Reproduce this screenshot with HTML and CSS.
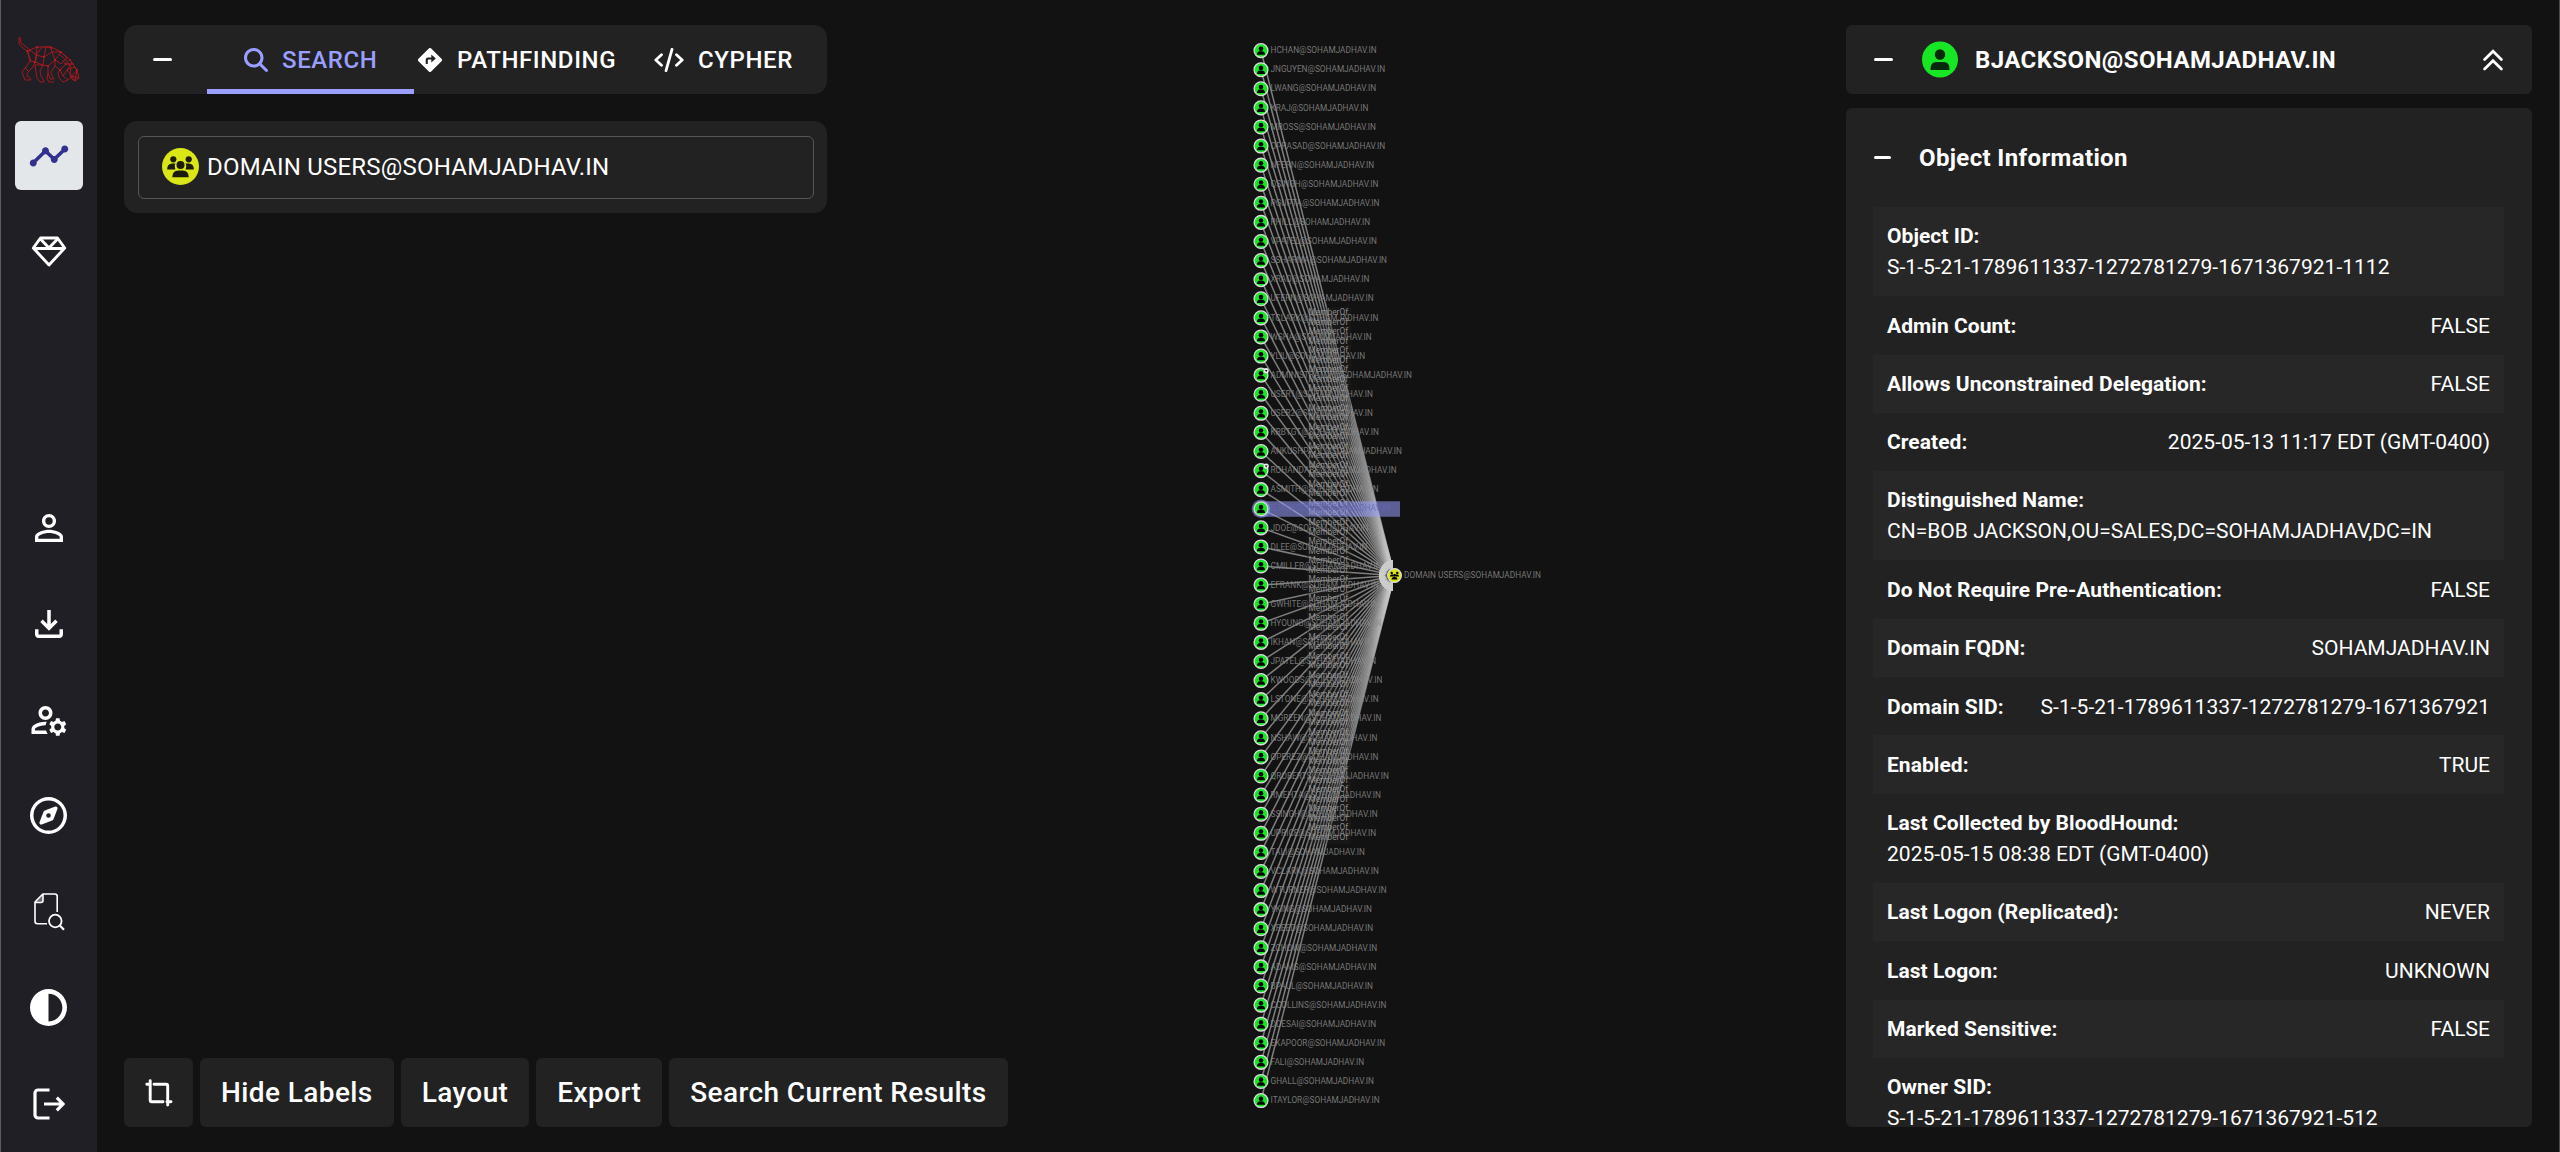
FILE: index.html
```html
<!DOCTYPE html>
<html lang="en">
<head>
<meta charset="utf-8">
<title>BloodHound</title>
<link rel="stylesheet" href="styles.css">
</head>
<body>
<div class="app">
  <nav class="rail">
    <svg class="logo" viewBox="17 35 64 50" width="64" height="50">
      <path d="M19 37v7l4 4 4 3 3-1 7-3h14l10 5 9 8 7 10 2 8-4 3-3-2-2-4 1-8-5-7-7-6M20 37l1 6 9 7-2 3 2 8-4 6-4 5 3 8h6l-2-3-2-1 1-4 5-5 3-7 1-6M25 67l3 4M27 51l4 10M30 50l6 5-1 7-5-1M37 47l-1 8 8 2 2-10M44 57l-1 8-8-3M44 57l8-5-1-5-7 0M36 55l6-8M52 52l9 0M52 52l3 8 6-8M55 60l-7 6-5-1M55 60l6 4 6-6-6-6M43 65l-8 0 1 7 1 6 3 4h4l-1-3-2-3-1-5 3-6M48 66v7l2 6h4l-2-3-1-4 4-6 0-6M48 73l-1 6 2 3h5M55 66l5 4 3 6 5 4-5 2-4-4-1-6 2-2 6-6-4-4M66 64l8 0M66 64l-6 6M63 76l4-6 5-8M67 70l7-3 3 3-5 6-5-6M72 76l7 2M68 80l4-4 3 5 2-11M72 52"/>
      <g class="logo-dots"><circle cx="27" cy="51" r=".8"/><circle cx="37" cy="47" r=".8"/><circle cx="51" cy="48" r=".8"/><circle cx="61" cy="52" r=".8"/><circle cx="70" cy="60" r=".8"/><circle cx="77" cy="70" r=".8"/><circle cx="44" cy="57" r=".8"/><circle cx="55" cy="60" r=".8"/><circle cx="48" cy="66" r=".8"/><circle cx="66" cy="64" r=".8"/><circle cx="60" cy="70" r=".8"/><circle cx="35" cy="62" r=".8"/></g>
    </svg>
    <a class="slot active"><svg viewBox="0 0 24 24" width="42" height="42"><path d="M23 8c0 1.100-.9 2-2 2-.18 0-.35-.02-.51-.07l-3.560 3.550c.05.16.07.34.07.52 0 1.100-.9 2-2 2s-2-.9-2-2c0-.18.02-.36.07-.52l-2.550-2.550c-.16.05-.34.07-.52.07s-.36-.02-.52-.07l-4.550 4.560c.05.16.07.33.07.51 0 1.100-.9 2-2 2s-2-.9-2-2 .9-2 2-2c.18 0 .35.02.51.07l4.560-4.550C8.020 9.360 8 9.180 8 9c0-1.100.9-2 2-2s2 .9 2 2c0 .18-.02.36-.07.52l2.550 2.550c.16-.05.34-.07.52-.07s.36.02.52.07l3.550-3.560C19.020 8.350 19 8.180 19 8c0-1.100.9-2 2-2s2 .9 2 2z"/></svg></a>
    <a class="slot"><svg viewBox="0 0 36 32" width="36" height="32"><g fill="none" stroke="#fff" stroke-width="2.900" stroke-linejoin="round"><path d="M9.500 2h17l7.200 10L18 29 2.300 12z"/><path d="M2.300 12.500h31.400M9.500 3l8.500 9 8.500-9"/></g></svg></a>
    <span class="spacer"></span>
    <a class="slot"><svg viewBox="0 0 24 24" width="42" height="42"><path d="M12 5.900a2.100 2.100 0 1 1 0 4.200 2.100 2.100 0 0 1 0-4.200m0 9c2.970 0 6.100 1.460 6.100 2.100v1.100H5.900V17c0-.64 3.130-2.100 6.100-2.100M12 4C9.790 4 8 5.790 8 8s1.790 4 4 4 4-1.790 4-4-1.790-4-4-4m0 9c-2.670 0-8 1.340-8 4v3h16v-3c0-2.660-5.330-4-8-4"/></svg></a>
    <a class="slot"><svg viewBox="0 0 24 24" width="42" height="42"><path d="M11 4h2v8l2.600-2.600L17 10.800l-5 5-5-5 1.400-1.400L11 12zM4 15h2v3h12v-3h2v3c0 1.100-.9 2-2 2H6c-1.100 0-2-.9-2-2z"/></svg></a>
    <a class="slot"><svg viewBox="0 0 24 24" width="42" height="42"><path d="M4 18v-.65c0-.34.16-.66.41-.81C6.100 15.530 8.030 15 10 15c.03 0 .05 0 .08.010.1-.7.300-1.370.590-1.980-.22-.02-.44-.03-.67-.03-2.420 0-4.680.67-6.610 1.820-.88.52-1.390 1.500-1.390 2.530V20h9.260c-.42-.6-.75-1.280-.97-2zM10 12c2.210 0 4-1.790 4-4s-1.790-4-4-4-4 1.790-4 4 1.790 4 4 4m0-6c1.100 0 2 .9 2 2s-.9 2-2 2-2-.9-2-2 .9-2 2-2m10.750 10c0-.22-.03-.42-.06-.63l1.140-1.010-1-1.730-1.450.49q-.48-.405-1.080-.63L18 11h-2l-.3 1.490q-.6.225-1.080.63l-1.450-.49-1 1.730 1.140 1.010c-.03.210-.06.410-.06.630s.03.420.06.63l-1.140 1.010 1 1.730 1.450-.49q.48.405 1.080.63L16 21h2l.3-1.490q.6-.225 1.080-.63l1.450.49 1-1.730-1.140-1.010c.03-.210.06-.410.06-.630M17 18c-1.100 0-2-.9-2-2s.9-2 2-2 2 .9 2 2-.9 2-2 2"/></svg></a>
    <a class="slot"><svg viewBox="0 0 512 512" width="37" height="37"><path d="M464 256a208 208 0 1 0-416 0 208 208 0 1 0 416 0M0 256a256 256 0 1 1 512 0 256 256 0 1 1-512 0m306.700 69.100-144.400 55.500c-19.200 7.400-38.200-11.500-30.800-30.800l55.500-144.400c3.300-8.500 9.900-15.100 18.400-18.400l144.400-55.500c19.200-7.400 38.200 11.500 30.800 30.800l-55.500 144.400c-3.200 8.500-9.900 15.100-18.400 18.400M288 256a32 32 0 1 0-64 0 32 32 0 1 0 64 0"/></svg></a>
    <a class="slot"><svg viewBox="0 0 32 38" width="32" height="38"><g fill="none" stroke="#fff" stroke-width="1.600" stroke-linejoin="round"><path d="M24.200 19V3.500A2.500 2.500 0 0 0 21.700 1H9.800L2 9v19.300a2.500 2.500 0 0 0 2.500 2.500H14M10 1v6.500A2 2 0 0 1 8 9.500H2"/><circle cx="22.300" cy="28" r="6.300" stroke-width="1.800"/><path d="M26.800 32.500l4.200 4.200" stroke-width="2.200"/></g><path d="M9.800 1v8.500H2z" opacity=".35"/></svg></a>
    <a class="slot"><svg viewBox="0 0 512 512" width="37" height="37"><path d="M448 256c0-106-86-192-192-192v384c106 0 192-86 192-192M0 256a256 256 0 1 1 512 0 256 256 0 1 1-512 0"/></svg></a>
    <a class="slot"><svg viewBox="0 0 32 32" width="32" height="32"><g fill="none" stroke="#fff" stroke-width="3.200"><path d="M16.500 2H5a3 3 0 0 0-3 3v22a3 3 0 0 0 3 3h11.500"/><path d="M11 16h19M23.800 9.600l6.300 6.400-6.300 6.400"/></g></svg></a>
  </nav>

  <main class="stage">
    <svg class="graph" width="2461" height="1152" viewBox="98 0 2461 1152"></svg>
    <div class="left">
      <div class="tabs">
        <span class="collapse"><i class="dash"></i></span>
        <div class="tab current"><svg viewBox="0 0 512 512" width="24" height="24"><path d="M416 208c0 45.900-14.900 88.300-40 122.700l126.600 126.700c12.500 12.500 12.500 32.800 0 45.300s-32.800 12.500-45.300 0L330.700 376C296.300 401.200 253.900 416 208 416 93.100 416 0 322.900 0 208S93.100 0 208 0s208 93.100 208 208M208 352a144 144 0 1 0 0-288 144 144 0 1 0 0 288"/></svg><b>SEARCH</b></div>
        <div class="tab path"><svg viewBox="0 0 24 24" width="24" height="24"><path fill-rule="evenodd" d="M10.800.5a1.700 1.700 0 0 1 2.400 0l10.300 10.300a1.700 1.700 0 0 1 0 2.400L13.200 23.500a1.700 1.700 0 0 1-2.400 0L.5 13.200a1.700 1.700 0 0 1 0-2.400zM13.300 6.500v3H10a2.300 2.300 0 0 0-2.300 2.300V16h2.100v-3.700c0-.4.200-.7.700-.7h2.800v3l4.500-4z"/></svg><b>PATHFINDING</b></div>
        <div class="tab cypher"><svg viewBox="0 0 30 24" width="30" height="24"><path d="M18 1.300l-6 21.400M7.500 6.800L1.800 12l5.700 5.200M22.500 6.800l5.700 5.200-5.700 5.200" fill="none" stroke="currentColor" stroke-width="2.800" stroke-linecap="round" stroke-linejoin="round"/></svg><b>CYPHER</b></div>
      </div>
      <div class="search"><div class="field">
        <svg viewBox="-18 -18 36 36" width="37" height="37"><circle r="18" fill="#dbe617"/><g fill="#1c1d08"><circle cx="-7" cy="-7" r="3"/><circle cx="8" cy="-7" r="3"/><path d="M-13 3q0-6 5-6h3q-1.500 2.500 0 6zM13 3q0-6-5-6H5q1.500 2.500 0 6z"/><circle cx="0" cy="-1.500" r="3.900"/><path d="M-8 10.500q0-6.500 6-6.500h4q6 0 6 6.500z"/></g></svg>
        <span>DOMAIN USERS@SOHAMJADHAV.IN</span></div></div>
      <div class="actions">
        <button class="crop"><svg viewBox="0 0 28 28" width="28" height="28"><g fill="none" stroke="#fff" stroke-width="2.900" stroke-linecap="round" stroke-linejoin="round"><path d="M5.200 1.800v19.500a1.500 1.500 0 0 0 1.500 1.500H18M1.800 5.300h3M9 5.300h12.200a1.500 1.500 0 0 1 1.500 1.500V26M22 22.700h4"/></g></svg></button>
        <button>Hide Labels</button><button>Layout</button><button>Export</button><button>Search Current Results</button>
      </div>
    </div>
    <aside class="right">
      <header class="entity">
        <i class="dash"></i>
        <svg viewBox="-18 -18 36 36" width="36" height="37"><circle r="18" fill="#17e625"/><circle cy="-5" r="5.200" fill="#062a09"/><path d="M-9.500 10.500v-1q0-7 6-7h7q6 0 6 7v1z" fill="#062a09"/></svg>
        <h1>BJACKSON@SOHAMJADHAV.IN</h1>
        <svg viewBox="0 0 20 22" width="20" height="22"><path d="M1.600 10.500L10 2.200l8.400 8.300M1.600 20L10 11.700l8.400 8.300" fill="none" stroke="#fff" stroke-width="2.700" stroke-linecap="round"/></svg>
      </header>
      <section class="info">
        <h2><i class="dash thin"></i><span>Object Information</span></h2>
        <dl>
          <div class="row tall"><dt>Object ID:</dt><dd>S-1-5-21-1789611337-1272781279-1671367921-1112</dd></div>
          <div class="row"><dt>Admin Count:</dt><dd>FALSE</dd></div>
          <div class="row"><dt>Allows Unconstrained Delegation:</dt><dd>FALSE</dd></div>
          <div class="row"><dt>Created:</dt><dd>2025-05-13 11:17 EDT (GMT-0400)</dd></div>
          <div class="row tall"><dt>Distinguished Name:</dt><dd>CN=BOB JACKSON,OU=SALES,DC=SOHAMJADHAV,DC=IN</dd></div>
          <div class="row"><dt>Do Not Require Pre-Authentication:</dt><dd>FALSE</dd></div>
          <div class="row"><dt>Domain FQDN:</dt><dd>SOHAMJADHAV.IN</dd></div>
          <div class="row"><dt>Domain SID:</dt><dd>S-1-5-21-1789611337-1272781279-1671367921</dd></div>
          <div class="row"><dt>Enabled:</dt><dd>TRUE</dd></div>
          <div class="row tall"><dt>Last Collected by BloodHound:</dt><dd>2025-05-15 08:38 EDT (GMT-0400)</dd></div>
          <div class="row"><dt>Last Logon (Replicated):</dt><dd>NEVER</dd></div>
          <div class="row"><dt>Last Logon:</dt><dd>UNKNOWN</dd></div>
          <div class="row"><dt>Marked Sensitive:</dt><dd>FALSE</dd></div>
          <div class="row tall"><dt>Owner SID:</dt><dd>S-1-5-21-1789611337-1272781279-1671367921-512</dd></div>
        </dl>
      </section>
    </aside>
  </main>
</div>
<script src="graph.js"></script>
</body>
</html>
```
FILE: styles.css
```css
* { box-sizing: border-box; }
body { margin: 0; background: #121212; color: #fff; font-family: Roboto, "Liberation Sans", sans-serif; }
svg { display: block; flex: none; }
h1, h2, dl, dd { margin: 0; }

.app { display: flex; width: 2560px; height: 1152px; overflow: hidden; border-left: 1px solid #5c5c5e; border-right: 1px solid #4a4a4a; }

.rail { width: 96px; flex: none; background: #201f26; padding: 35px 0 14px 14px; display: flex; flex-direction: column; align-items: flex-start; gap: 27px; }
.logo { margin: 0 0 9px 2px; }
.logo path { fill: none; stroke: #b5191c; stroke-width: .85; stroke-linejoin: round; }
.logo-dots { fill: #e02020; }
.slot { width: 68px; height: 69px; border-radius: 6px; display: grid; place-items: center; fill: #fff; }
.slot svg { margin: 0 1px 0 0; }
.slot.active { background: #e3e7ea; fill: #33318f; }
.spacer { flex: 1; }

.stage { position: relative; flex: 1; display: flex; justify-content: space-between; padding: 25px 27px 25px 27px; }
.graph { position: absolute; left: 1px; top: 0; }
.graph text { font-size: 8.270px; fill: #8c8c8c; fill-opacity: .85; }
.graph .mids text { fill: #a2a2a2; }
.graph text.selected { fill: #20225a; }
.left, .right { position: relative; display: flex; flex-direction: column; }

.tabs { width: 703px; height: 69px; border-radius: 13px; background: #222; display: flex; align-items: stretch; }
.collapse { width: 83px; display: flex; align-items: center; padding-left: 29px; }
.dash { display: block; width: 19px; height: 3px; border-radius: 2px; background: #fff; flex: none; }
.tab { display: flex; align-items: center; }
.tab b { font-weight: 500; font-size: 24px; letter-spacing: .6px; }
.tab svg { fill: currentColor; }
.current { width: 207px; padding: 5px 0 0 37px; gap: 14px; color: #999eff; border-bottom: 5px solid #999eff; }
.path { padding-left: 4px; gap: 15px; width: 240px; }
.cypher { gap: 14px; }

.search { width: 703px; height: 92px; margin-top: 27px; border-radius: 13px; background: #222; padding: 15px 13px 14px 14px; }
.field { height: 63px; border: 1px solid #555; border-radius: 6px; display: flex; align-items: center; gap: 8px; padding: 0 0 2px 23px; font-size: 24px; letter-spacing: .22px; }

.actions { display: flex; gap: 7px; margin-top: auto; }
.actions button { height: 69px; border: 0; border-radius: 6px; background: #222; color: #fff; font: 500 28px Roboto, "Liberation Sans", sans-serif; letter-spacing: .4px; padding: 0 21px; }
.actions .crop { padding: 0 20.500px; }

.right { width: 686px; gap: 14px; }
.entity { height: 69px; flex: none; background: #222; border-radius: 6px; display: flex; align-items: center; padding: 0 29px 0 28px; }
.entity h1 { font-size: 24px; font-weight: 700; letter-spacing: .4px; margin-left: 17px; flex: 1; }
.entity svg:first-of-type { margin-left: 29px; }
.info { flex: 1; min-height: 0; overflow: hidden; background: #222; border-radius: 6px; padding: 0 28px 0 27px; }
.info h2 { height: 99px; display: flex; align-items: center; gap: 28px; font-size: 24px; font-weight: 700; letter-spacing: .36px; }
.dash.thin { width: 17px; margin-left: 1px; }
.row { height: 58.350px; padding: 1.600px 14px 0; display: flex; align-items: center; justify-content: space-between; font-size: 21px; letter-spacing: .02px; line-height: 31px; }
.row:nth-child(odd) { background: #272727; }
.row.tall { height: 89.200px; flex-direction: column; align-items: flex-start; justify-content: center; padding-top: .4px; }
.row dt { font-weight: 700; letter-spacing: .05px; }
```
FILE: graph.js
```js
const users = `HCHAN JNGUYEN LWANG KRAJ MROSS OPRASAD NFERN QSINGH PGUPTA RHILL VPATEL SSHARMA XRAO UFERN TCLARK WSHA YLIU
ADMINISTRATOR USER1 USER2 KRBTGT ANKUSHPATIL ROHANDABE ASMITH BJACKSON JDOE DLEE CMILLER EFRANK GWHITE HYOUNG IKHAN JPATEL
KWOODS LSTONE MGREEN NSHAW OPEREZ QROBERTS RMEHTA SSINGH UPRICE TALI VCLARK WTURNER YKING XREED ZCHOW ADAMS BPAUL CCOLLINS
DDESAI EKAPOOR FALI GHALL ITAYLOR`.split(/\s+/);
const X = 1261, TOP = 50.6, STEP = 19.09, SELECTED = 24, HUB = { x: 1394.5, y: 575.5 };
const domain = "@SOHAMJADHAV.IN";
let edges = "", heads = "", mids = "", labels = "", nodes = "";
users.forEach((name, i) => {
  const y = TOP + i * STEP, dx = HUB.x - X, dy = HUB.y - y, len = Math.hypot(dx, dy);
  const ux = dx / len, uy = dy / len;
  const tx = HUB.x - ux * 7, ty = HUB.y - uy * 7, bx = HUB.x - ux * 15.5, by = HUB.y - uy * 15.5;
  edges += `<path d="M${X} ${y}L${bx} ${by}"/>`;
  heads += `<path d="M${tx} ${ty}L${bx - uy * 2.3} ${by + ux * 2.3}L${bx + uy * 2.3} ${by - ux * 2.3}z"/>`;
  const my = (y + HUB.y) / 2;
  mids += `<rect x="1307" y="${my - 6}" width="44" height="12"/><text x="1308.500" y="${my + 2}" textLength="39.500">MemberOf</text>`;
  labels += `<text${i === SELECTED ? ' class="selected"' : ""} x="1270.500" y="${y + 2.7}">${name}${domain}</text>`;
  nodes += `<g transform="translate(${X} ${y})"><circle r="6.900" fill="#17e625" stroke="#dcdcdc" stroke-width="1.300"/><circle cy="-1.800" r="2.300"/><path d="M-4 4.200q0-3.500 3-3.500h2q3 0 3 3.500z"/></g>`;
});
const selY = TOP + SELECTED * STEP;
const gem = i => `<g transform="translate(1266.200 ${TOP + i * STEP - 4.5})"><circle r="2.600" fill="#eee"/><path d="M-1.300-.7h2.600L0 1.300z"/></g>`;
document.querySelector(".graph").innerHTML = `
<g stroke="#c8c8c8" stroke-opacity=".6" stroke-width="1.500">${edges}</g><g fill="#ccc">${heads}</g>
<g class="mids" fill="#2a2a2a" fill-opacity=".22">${mids}</g>
<g>${labels}<text x="1404" y="578" textLength="137">DOMAIN USERS${domain}</text></g>
<g fill="#999eff" fill-opacity=".55"><rect x="1261" y="${selY - 7.5}" width="139" height="15.500"/><circle cx="1261" cy="${selY}" r="9.300"/></g>
${nodes}${gem(17)}${gem(22)}
<g transform="translate(${HUB.x} ${HUB.y})"><circle r="6.900" fill="#dbe617" stroke="#ddd" stroke-width="1.200"/><circle cx="-2.800" cy="-2.500" r="1.200"/><circle cx="2.800" cy="-2.500" r="1.200"/><circle cy="-.3" r="1.500"/><path d="M-4.500 1q0-2 2-2h1v2zM4.500 1q0-2-2-2h-1v2zM-3 4q0-2.500 2-2.500h2q2 0 2 2.500z"/></g>`;
```
